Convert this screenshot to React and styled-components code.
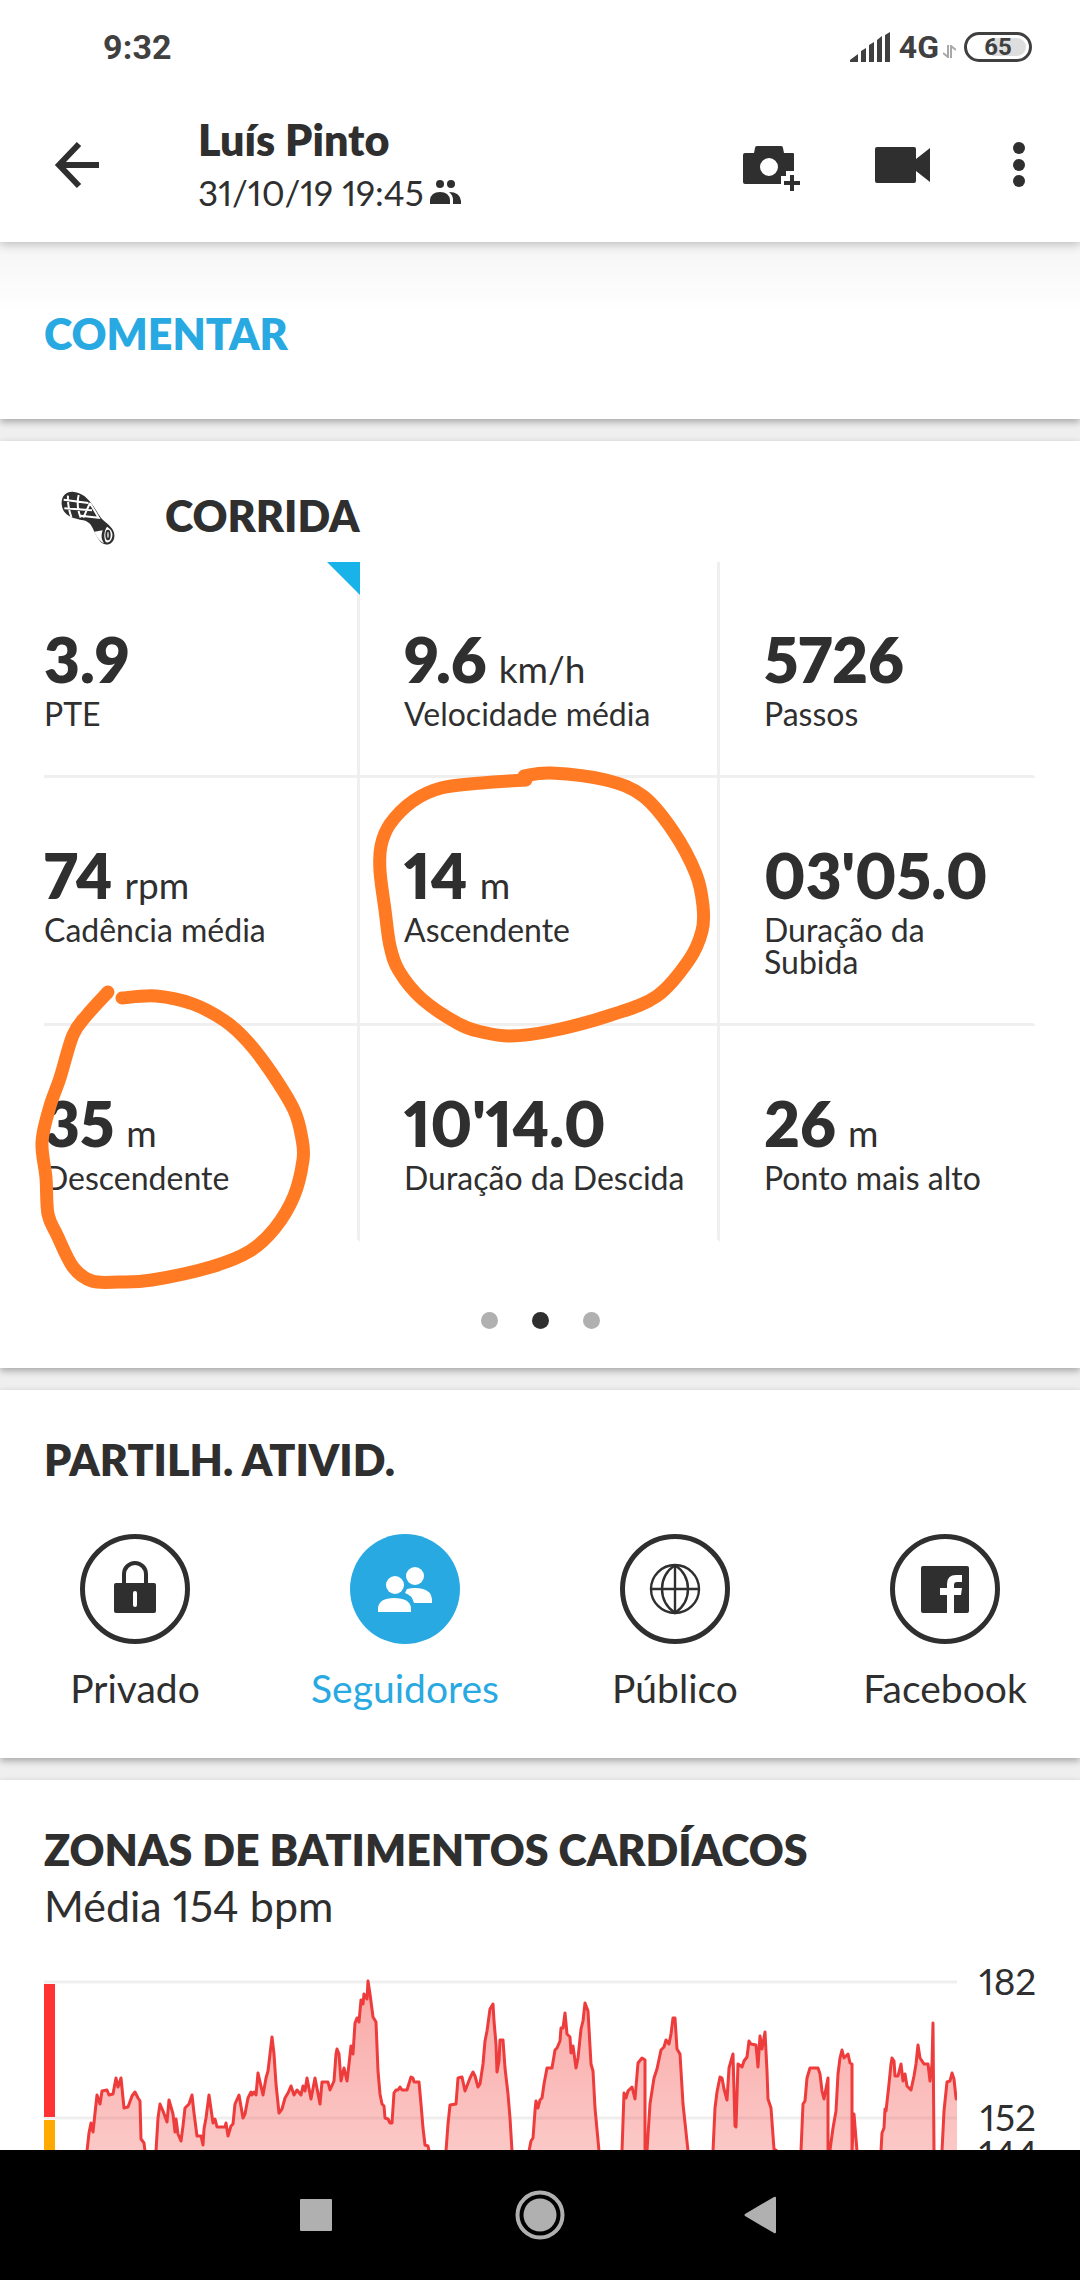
import React from 'react';
import styled, { createGlobalStyle, ThemeProvider } from 'styled-components';

const theme = {
  ink: '#2f2f2f',
  blue: '#29a9e1',
  line: '#efefef',
  grey: '#b0b0b0',
  orange: '#ff7a22',
  red: '#ff3333',
};

const GlobalStyle = createGlobalStyle`
  * {
    box-sizing: border-box;
  }
  body {
    margin: 0;
    background: #efefef;
    color: ${theme.ink};
    font-family: Lato, "Open Sans", sans-serif;
    font-variant-numeric: lining-nums proportional-nums;
  }
  button {
    font: inherit;
    color: inherit;
    background: none;
    border: none;
    padding: 0;
    cursor: pointer;
  }
  svg {
    display: block;
  }
`;

const Screen = styled.div`
  display: flex;
  flex-direction: column;
  height: 100vh;
  overflow: hidden;
`;

const StatusBar = styled.div`
  display: flex;
  align-items: center;
  justify-content: space-between;
  height: 88px;
  padding: 6px 48px 0 103px;
  background: #fff;
  z-index: 2;
  color: #404040;
  font-family: Roboto, sans-serif;
  font-weight: 700;
  font-size: 34px;
`;

const StatusIcons = styled.div`
  display: flex;
  align-items: center;
  gap: 8px;
  font-size: 32px;
`;

const Network = styled.span`
  display: flex;
  align-items: baseline;
  gap: 4px;
`;

const Battery = styled.span`
  display: flex;
  align-items: center;
  justify-content: center;
  width: 68px;
  height: 30px;
  border: 3px solid #404040;
  border-radius: 15px;
  background: linear-gradient(90deg, #fff 40%, #dedede 40%) content-box;
  padding: 3px;
  font-size: 24px;
`;

const Header = styled.header`
  display: flex;
  align-items: center;
  flex-shrink: 0;
  height: 154px;
  padding: 0 49px 0 51px;
  background: #fff;
  z-index: 1;
  box-shadow: 0 2px 10px rgba(0, 0, 0, 0.25);
`;

const HeaderText = styled.div`
  flex: 1;
  display: flex;
  flex-direction: column;
  gap: 6px;
  margin-left: 95px;
`;

const Title = styled.h2`
  margin: 0;
  font-size: 43px;
  line-height: 48px;
  font-weight: 800;
`;

const DateLine = styled.div`
  display: flex;
  align-items: center;
  gap: 6px;
  font-size: 35px;
  line-height: 44px;
`;

const HeaderActions = styled.div`
  display: flex;
  align-items: center;
  gap: 72px;
`;

const Content = styled.main`
  display: flex;
  flex-direction: column;
  flex: 1;
  gap: 22px;
  min-height: 0;
  overflow: hidden;
`;

const Card = styled.section`
  position: relative;
  flex-shrink: 0;
  background: #fff;
  box-shadow: 0 3px 7px rgba(0, 0, 0, 0.3);
`;

const CommentCard = styled(Card)`
  padding: 68px 44px 61px;
  background: linear-gradient(#f5f5f5, #fff 72px);
`;

const CommentButton = styled.button`
  display: block;
  font-size: 43px;
  line-height: 48px;
  font-weight: 800;
  color: ${({ theme }) => theme.blue};
`;

const ActivityHead = styled.div`
  display: flex;
  align-items: center;
  gap: 33px;
  height: 121px;
  padding: 28px 44px 0;
`;

const ActivityIcon = styled.span`
  display: flex;
  justify-content: center;
  width: 88px;
`;

const StatGrid = styled.div`
  display: grid;
  grid-template-columns: 316fr 360fr 316fr;
  margin: 0 44px;
`;

const Stat = styled.div`
  position: relative;
  min-width: 0;
  padding: 67px 28px 45px ${({ $first }) => ($first ? '0' : '44px')};
  border-right: 3px solid ${({ theme, $last }) => ($last ? 'transparent' : theme.line)};
  border-bottom: 3px solid ${({ theme, $bottom }) => ($bottom ? 'transparent' : theme.line)};
`;

const StatValue = styled.div`
  font-size: 62px;
  line-height: 60px;
  font-weight: 800;
  white-space: nowrap;
`;

const StatUnit = styled.span`
  margin-left: 12px;
  font-size: 37px;
  line-height: 36px;
  font-weight: 400;
`;

const StatLabel = styled.div`
  margin-top: 9px;
  font-size: 32px;
  line-height: 32px;
`;

const Corner = styled.span`
  position: absolute;
  top: 0;
  right: -3px;
  width: 33px;
  height: 33px;
  background: #19b3ea;
  clip-path: polygon(0 0, 100% 0, 100% 100%);
`;

const Marks = styled.svg`
  position: absolute;
  top: 0;
  left: 0;
  width: 100%;
  height: 100%;
  pointer-events: none;
`;

const Pager = styled.div`
  display: flex;
  justify-content: center;
  gap: 34px;
  padding: 70px 0 39px;
`;

const PagerDot = styled.button`
  width: 17px;
  height: 17px;
  border-radius: 50%;
  background: ${({ theme, $active }) => ($active ? theme.ink : theme.grey)};
`;

const ShareCard = styled(Card)`
  padding: 46px 0 48px;
`;

const ShareTitle = styled(Title)`
  margin: 0 44px 50px;
`;

const ShareRow = styled.div`
  display: grid;
  grid-template-columns: repeat(4, 1fr);
`;

const ShareOption = styled.button`
  display: flex;
  flex-direction: column;
  align-items: center;
  gap: 22px;
  font-size: 39px;
  line-height: 44px;
  color: ${({ theme, $active }) => ($active ? theme.blue : theme.ink)};
`;

const HeartCard = styled(Card)`
  padding: 46px 44px 0;
`;

const Average = styled.p`
  margin: 8px 0 33px;
  font-size: 43px;
  line-height: 48px;
`;

const Chart = styled.div`
  display: flex;
  gap: 22px;
`;

const ChartSvg = styled.svg`
  flex: 1;
  min-width: 0;
  height: 220px;
`;

const Scale = styled.div`
  display: flex;
  flex-direction: column;
  width: 57px;
  font-size: 37px;
  line-height: 36px;
  text-align: right;
`;

const ScaleLabel = styled.span`
  margin-bottom: ${({ $gap }) => $gap}px;
`;

const NavBar = styled.nav`
  display: flex;
  align-items: center;
  justify-content: center;
  gap: 160px;
  flex-shrink: 0;
  height: 130px;
  background: #000;
  z-index: 1;
`;

const NavButton = styled.button`
  width: 64px;
  height: 64px;
`;

const stats = [
  { value: '3.9', label: 'PTE', corner: true },
  { value: '9.6', unit: 'km/h', label: 'Velocidade média' },
  { value: '5726', label: 'Passos' },
  { value: '74', unit: 'rpm', label: 'Cadência média' },
  { value: '14', unit: 'm', label: 'Ascendente' },
  { value: "03'05.0", label: 'Duração da Subida' },
  { value: '35', unit: 'm', label: 'Descendente' },
  { value: "10'14.0", label: 'Duração da Descida' },
  { value: '26', unit: 'm', label: 'Ponto mais alto' },
];

// hand drawn rings, in card coordinates
const ringUp = [
  [526, 339], [482, 342], [441, 347], [413, 360], [390, 383], [381, 405], [380, 430], [385, 469],
  [390, 505], [399, 530], [422, 558], [459, 583], [482, 591], [510, 595], [551, 590], [611, 574],
  [657, 555], [689, 519], [702, 490], [703, 465], [696, 433], [673, 390], [643, 355], [606, 339],
  [551, 332], [524, 335],
];
const ringDown = [
  [122, 557], [156, 555], [193, 563], [225, 580], [248, 601], [271, 631], [294, 669], [302, 698],
  [303, 719], [294, 755], [275, 787], [250, 810], [211, 826], [152, 839], [119, 841], [92, 840],
  [73, 826], [57, 794], [48, 773], [46, 737], [42, 701], [50, 665], [60, 637], [73, 594],
  [87, 574], [108, 551],
];

const smooth = (pts) => {
  let d = `M${pts[0]}`;
  for (let i = 0; i < pts.length - 1; i++) {
    const p0 = pts[i - 1] || pts[i];
    const p1 = pts[i];
    const p2 = pts[i + 1];
    const p3 = pts[i + 2] || p2;
    const c1 = [p1[0] + (p2[0] - p0[0]) / 6, p1[1] + (p2[1] - p0[1]) / 6];
    const c2 = [p2[0] - (p3[0] - p1[0]) / 6, p2[1] - (p3[1] - p1[1]) / 6];
    d += ` C${c1} ${c2} ${p2}`;
  }
  return d;
};

const heartRate = `
  40,200 43,170 45,152 47,142 49,151 52,123 53,114 56,123 58,110 63,109 65,114 69,113 72,97 74,106 77,97
  80,127 84,126 88,115 91,111 94,117 96,120 97,158 100,162 101,170 104,200 108,200 112,170 114,137
  116,123 119,130 123,141 125,119 129,133 131,151 132,138 134,153 137,160 139,145 141,127 145,123
  148,114 150,132 153,155 157,155 159,164 160,148 162,137 165,114 168,135 169,142 171,138 173,146
  181,146 182,142 184,155 187,145 189,143 191,123 195,114 199,137 201,133 204,117 207,111 208,114
  210,111 212,114 214,92 219,114 222,97 224,90 226,73 228,56 230,73 232,103 235,132 238,128 241,117
  244,112 247,105 250,114 253,109 257,114 259,105 261,110 263,97 267,118 271,97 276,123 278,101
  284,101 286,109 290,100 292,73 293,68 295,73 297,100 300,87 303,100 305,83 307,65 309,73 311,42
  313,37 315,41 317,19 319,23 320,13 323,18 324,0 326,13 329,36 332,41 334,90 336,113 338,123 340,125
  341,137 344,138 346,142 348,142 350,112 352,109 354,109 356,106 358,109 363,109 367,96 369,97
  370,101 375,101 377,123 379,147 381,164 384,165 385,170 390,200 398,200 402,170 404,143 406,124
  412,123 414,97 418,96 421,110 426,97 429,91 431,95 434,106 436,103 439,83 441,60 443,50 446,28
  449,23 450,40 452,63 453,91 455,80 456,59 459,59 461,87 464,113 466,137 468,170 472,200 480,200
  485,170 487,160 489,157 491,130 492,120 494,127 496,119 498,117 500,103 503,87 508,87 511,69 513,67
  516,60 517,47 519,47 521,32 523,53 526,56 527,72 529,65 532,87 534,77 537,48 539,40 541,22 544,30
  547,83 549,90 551,127 555,170 560,200 570,200 578,170 580,112 582,117 584,110 588,106 591,118
  594,82 598,77 601,79 601,168 603,170 606,123 610,97 613,88 617,69 620,66 622,59 625,63 627,53
  629,37 631,37 633,68 636,73 639,123 644,170 650,200 664,200 669,170 671,127 673,111 676,96 678,97
  680,108 683,119 685,87 689,73 691,145 692,146 694,83 698,86 700,80 703,76 705,60 707,63 712,64
  714,86 716,55 718,68 721,51 723,90 724,118 727,127 730,168 733,170 740,200 752,200 757,170 759,123
  761,120 763,97 766,87 774,87 776,93 778,110 780,118 784,97 784,168 786,169 789,147 792,130 794,93
  796,77 798,69 800,77 804,73 806,82 808,83 808,170 810,133 813,170 818,200 830,200 837,170 838,152
  840,147 841,128 842,130 845,103 847,83 848,77 850,80 851,95 854,95 857,83 859,100 861,93 863,105
  867,109 870,95 872,83 874,64 876,77 880,83 884,83 886,100 888,83 889,42 890,170 893,200 896,185
  898,170 900,130 903,101 906,100 908,92 910,98 912,117 913,119
`;

const SignalIcon = () => (
  <svg width="41" height="30" viewBox="0 0 41 30" fill="#404040">
    <path d="M0 30v-2l8-6v8zM11 30V19l5-3v14zM19 30V13l5-3v20zM27 30V8l5-4v26zM35 30V3l5-3v30z" />
  </svg>
);

const DataIcon = () => (
  <svg width="13" height="13" viewBox="0 0 13 13" fill="none" stroke="#a8a8a8" strokeWidth="2">
    <path d="M5 0v12L0 8M8 13V1l5 4" />
  </svg>
);

const BackIcon = () => (
  <svg width="52" height="52" viewBox="0 0 52 52" fill="none" stroke={theme.ink} strokeWidth="6">
    <path d="M48 26H8M28 5L8 26l20 21" />
  </svg>
);

const CameraIcon = () => (
  <svg width="60" height="60" viewBox="0 0 60 60" fill={theme.ink}>
    <path
      fillRule="evenodd"
      d="M2 18h9l1-5q0-2 2-2h24q2 0 2 2l1 5h9q1 0 1 1v17h-8v5h-5v8H2q-2 0-2-2V20q0-2 2-2zM26 23a9 9 0 1 0 0 18a9 9 0 1 0 0-18z"
    />
    <path d="M47 40h4v6h6v4h-6v6h-4v-6h-6v-4h6z" />
  </svg>
);

const VideoIcon = () => (
  <svg width="60" height="60" viewBox="0 0 60 60" fill={theme.ink}>
    <path d="M2 12h37q2 0 2 2v10l14-11v34L41 36v10q0 2-2 2H2q-2 0-2-2V14q0-2 2-2z" />
  </svg>
);

const MoreIcon = () => (
  <svg width="24" height="60" viewBox="0 0 24 60" fill={theme.ink}>
    <circle cx="12" cy="13" r="6" />
    <circle cx="12" cy="30" r="6" />
    <circle cx="12" cy="46" r="6" />
  </svg>
);

const GroupIcon = () => (
  <svg width="31" height="24" viewBox="0 0 31 24" fill={theme.ink}>
    <circle cx="10" cy="4" r="4" />
    <circle cx="21" cy="4" r="4" />
    <path d="M0 24v-4q1-8 10-8t10 8v4zM19 12q11 0 12 9v3h-8v-4q0-5-4-8z" />
  </svg>
);

const ShoeIcon = () => (
  <svg width="64" height="64" viewBox="18 9 192 192">
    <path
      fill={theme.ink}
      d="M35 70C33 45 50 30 72 33C95 35 115 52 130 75C145 98 150 110 165 122C185 138 195 150 193 168C191 185 178 193 165 190C148 186 140 165 132 150C124 132 118 122 100 118C70 112 38 105 35 70Z"
    />
    <g fill="none" stroke="#fff" strokeWidth="6">
      <path d="M54 44Q52 75 64 108M86 42Q78 75 92 110M41 56L115 66M43 82L126 88M120 66L100 110M120 66L146 110L92 104" />
    </g>
    <path fill="#fff" d="M133 152L158 148C152 165 155 178 162 186C148 182 139 165 133 152Z" />
    <path fill="#fff" d="M171 137C186 146 190 158 186 170C182 182 174 186 168 184C160 170 162 150 171 137Z" />
    <ellipse cx="174" cy="162" rx="5" ry="13" fill="none" stroke={theme.ink} strokeWidth="6" />
  </svg>
);

const Ring = () => <circle cx="55" cy="55" r="52.5" fill="none" stroke={theme.ink} strokeWidth="5" />;

const LockIcon = () => (
  <svg width="110" height="110" viewBox="0 0 110 110">
    <Ring />
    <path d="M44 51V40a11 11 0 0 1 22 0v11" fill="none" stroke={theme.ink} strokeWidth="4" />
    <rect x="34" y="49" width="42" height="30" rx="2" fill={theme.ink} />
    <rect x="53" y="57" width="4" height="16" rx="2" fill="#fff" />
  </svg>
);

const FollowersIcon = () => (
  <svg width="110" height="110" viewBox="0 0 110 110" fill="#fff">
    <circle cx="55" cy="55" r="55" fill={theme.blue} />
    <circle cx="45" cy="51" r="9" />
    <circle cx="65" cy="42" r="9" />
    <path d="M28 78v-4q1-10 16-10q16 0 17 10v4zM57 55q8-2 16 0q8 2 9 10v4H64q-2-8-9-10z" />
  </svg>
);

const GlobeIcon = () => (
  <svg width="110" height="110" viewBox="0 0 110 110">
    <Ring />
    <g fill="none" stroke={theme.ink} strokeWidth="2.4">
      <circle cx="55" cy="55" r="24" />
      <path d="M55 31v48M31 55h48M55 31q-13 9-13 24t13 24q13-9 13-24t-13-24" />
    </g>
  </svg>
);

const FacebookIcon = () => (
  <svg width="110" height="110" viewBox="0 0 110 110">
    <Ring />
    <path
      fill={theme.ink}
      d="M33 32h44q2 0 2 2v43q0 2-2 2H64V61h7l1-7h-8v-3q0-3 3-3h5v-7h-6q-9 0-9 9v4h-7v7h7v18H33q-2 0-2-2V34q0-2 2-2z"
    />
  </svg>
);

const shares = [
  { label: 'Privado', Icon: LockIcon },
  { label: 'Seguidores', Icon: FollowersIcon, active: true },
  { label: 'Público', Icon: GlobeIcon },
  { label: 'Facebook', Icon: FacebookIcon },
];

const HeartChart = () => (
  <ChartSvg viewBox="0 -18 913 220" preserveAspectRatio="none">
    <defs>
      <linearGradient id="heart" x1="0" y1="0" x2="0" y2="1">
        <stop offset="0" stopColor="#f0332d" stopOpacity="0.42" />
        <stop offset="1" stopColor="#f0332d" stopOpacity="0.24" />
      </linearGradient>
    </defs>
    <path d="M0 1H913M0 137H913" stroke={theme.line} strokeWidth="3" />
    <rect x="0" y="3" width="11" height="133" fill={theme.red} />
    <rect x="0" y="139" width="11" height="70" fill="#ffaa00" />
    <polygon points={`40,202 ${heartRate} 913,202`} fill="url(#heart)" />
    <polyline points={heartRate} fill="none" stroke="#ee3b3b" strokeWidth="3" strokeLinejoin="round" />
  </ChartSvg>
);

const App = () => {
  return (
    <ThemeProvider theme={theme}>
      <GlobalStyle />
      <Screen>
        <StatusBar>
          <span>9:32</span>
          <StatusIcons>
            <SignalIcon />
            <Network>4G<DataIcon /></Network>
            <Battery>65</Battery>
          </StatusIcons>
        </StatusBar>
        <Header>
          <button aria-label="Voltar"><BackIcon /></button>
          <HeaderText>
            <Title as="h1">Luís Pinto</Title>
            <DateLine>31/10/19 19:45 <GroupIcon /></DateLine>
          </HeaderText>
          <HeaderActions>
            <button aria-label="Adicionar foto"><CameraIcon /></button>
            <button aria-label="Vídeo"><VideoIcon /></button>
            <button aria-label="Mais opções"><MoreIcon /></button>
          </HeaderActions>
        </Header>
        <Content>
          <CommentCard>
            <CommentButton>COMENTAR</CommentButton>
          </CommentCard>
          <Card>
            <ActivityHead>
              <ActivityIcon><ShoeIcon /></ActivityIcon>
              <Title>CORRIDA</Title>
            </ActivityHead>
            <StatGrid>
              {stats.map(({ value, unit, label, corner }, i) => (
                <Stat key={label} $first={i % 3 === 0} $last={i % 3 === 2} $bottom={i > 5}>
                  {corner && <Corner />}
                  <StatValue>
                    {value}
                    {unit && <StatUnit>{unit}</StatUnit>}
                  </StatValue>
                  <StatLabel>{label}</StatLabel>
                </Stat>
              ))}
            </StatGrid>
            <Pager>
              <PagerDot aria-label="Página 1" />
              <PagerDot aria-label="Página 2" $active />
              <PagerDot aria-label="Página 3" />
            </Pager>
            <Marks viewBox="0 0 1080 927" fill="none" stroke={theme.orange} strokeWidth="13" strokeLinecap="round">
              <path d={smooth(ringUp)} />
              <path d={smooth(ringDown)} />
            </Marks>
          </Card>
          <ShareCard>
            <ShareTitle>PARTILH. ATIVID.</ShareTitle>
            <ShareRow>
              {shares.map(({ label, Icon, active }) => (
                <ShareOption key={label} $active={active}>
                  <Icon />
                  {label}
                </ShareOption>
              ))}
            </ShareRow>
          </ShareCard>
          <HeartCard>
            <Title>ZONAS DE BATIMENTOS CARDÍACOS</Title>
            <Average>Média 154 bpm</Average>
            <Chart>
              <HeartChart />
              <Scale>
                <ScaleLabel $gap={100}>182</ScaleLabel>
                <ScaleLabel $gap={0}>152</ScaleLabel>
                <ScaleLabel $gap={0}>144</ScaleLabel>
              </Scale>
            </Chart>
          </HeartCard>
        </Content>
        <NavBar>
          <NavButton aria-label="Recentes">
            <svg viewBox="0 0 64 64" fill={theme.grey}>
              <rect x="16" y="16" width="32" height="32" rx="1" />
            </svg>
          </NavButton>
          <NavButton aria-label="Início">
            <svg viewBox="0 0 64 64" fill={theme.grey}>
              <circle cx="32" cy="32" r="22.5" fill="none" stroke={theme.grey} strokeWidth="4" />
              <circle cx="32" cy="32" r="16.5" />
            </svg>
          </NavButton>
          <NavButton aria-label="Anterior">
            <svg viewBox="0 0 64 64" fill={theme.grey}>
              <path d="M13 31L42 14q2-1 2 1v34q0 2-2 1L13 33q-1-1 0-2z" />
            </svg>
          </NavButton>
        </NavBar>
      </Screen>
    </ThemeProvider>
  );
};

export default App;
